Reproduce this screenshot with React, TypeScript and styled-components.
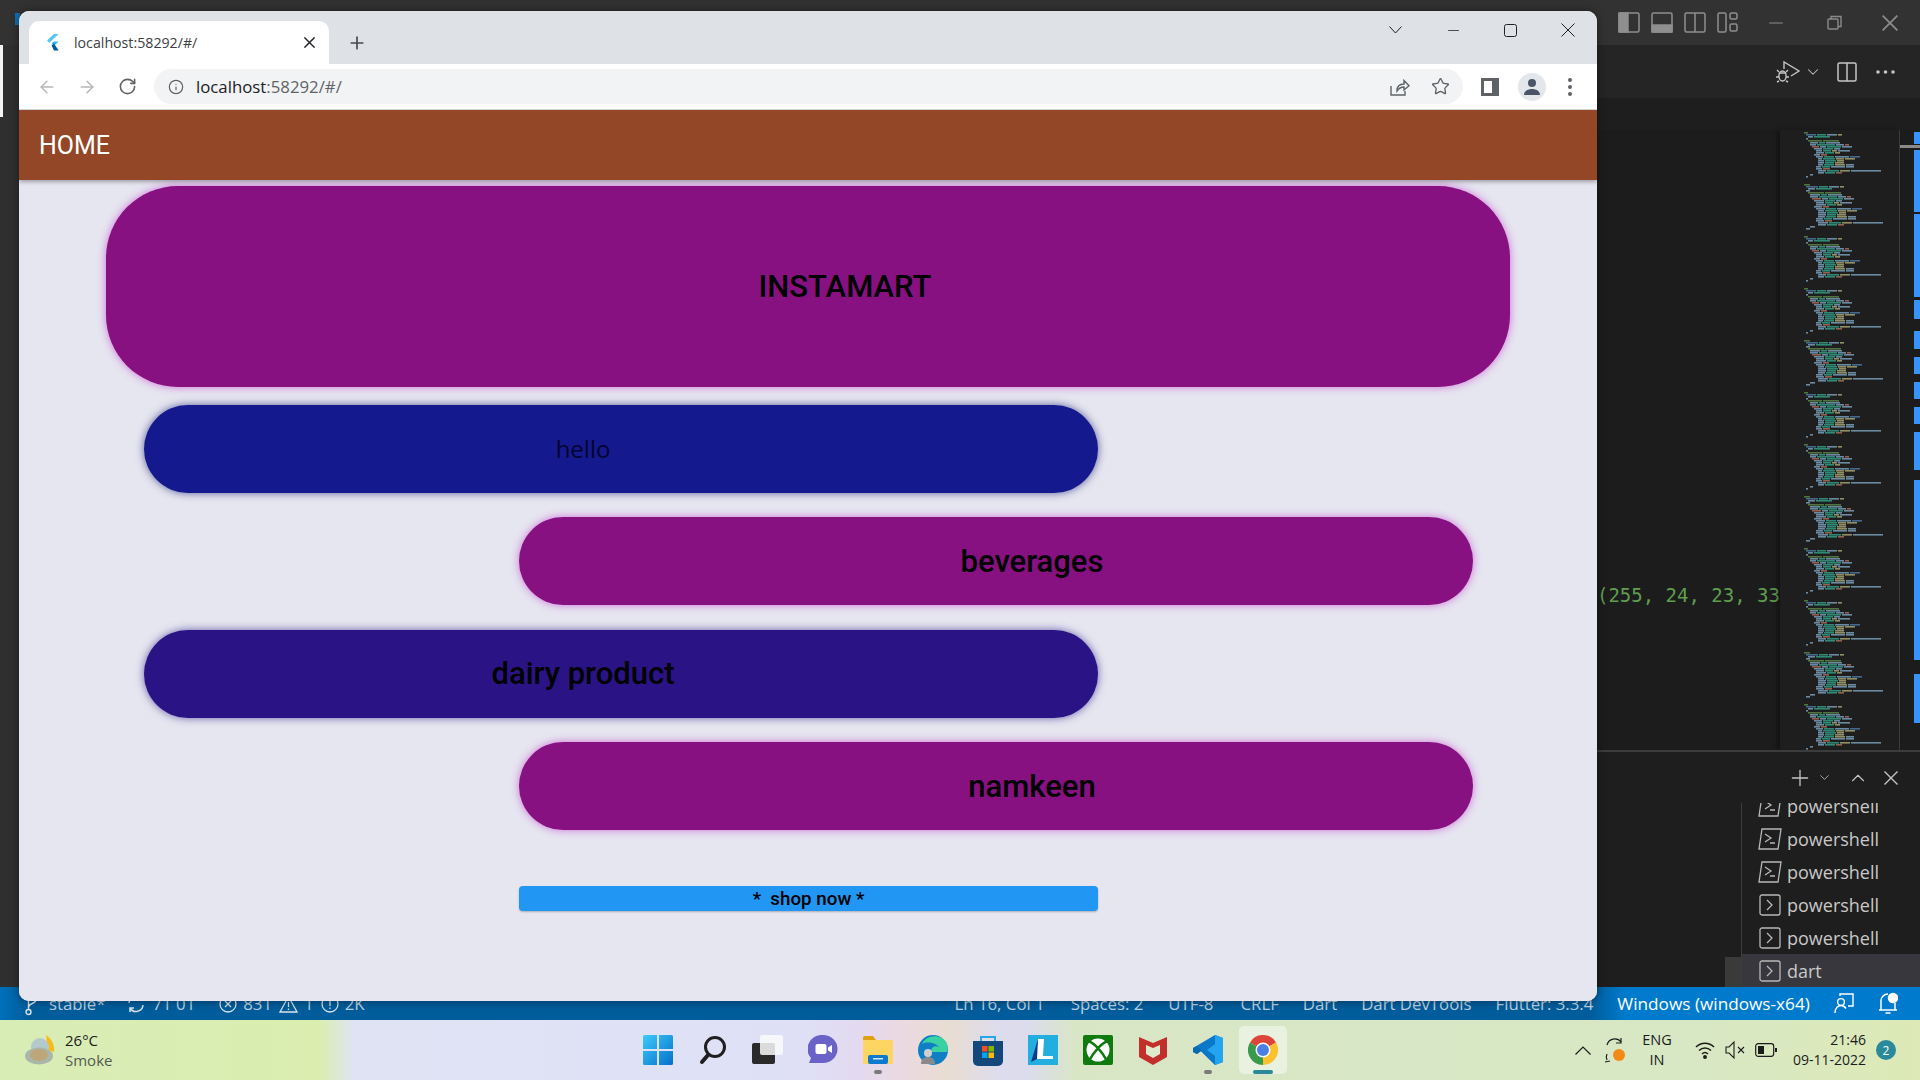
import React from 'react';
import styled, { createGlobalStyle } from 'styled-components';
import { ArrowLeft, ArrowRight, RotateCw, Info, Star, Plus, ChevronDown, ChevronUp, Minus } from 'lucide-react';

const UI_FONT = '"Open Sans", "Noto Sans", sans-serif';

const GlobalStyle = createGlobalStyle`
  html, body {
    margin: 0;
    padding: 0;
    background: #2c2c2c;
  }
  body {
    font-family: ${UI_FONT};
    overflow: hidden;
  }
  svg {
    display: block;
    flex-shrink: 0;
  }
`;

const Desktop = styled.div`
  position: relative;
  width: 1920px;
  height: 1080px;
  overflow: hidden;
  display: flex;
  flex-direction: column;
`;

/* ---------- vs code behind the browser ---------- */

const VsCode = styled.div`
  height: 1020px;
  display: flex;
  flex-direction: column;
  background: #1e1e1e;
`;

const TitleBar = styled.div`
  height: 45px;
  flex-shrink: 0;
  background: #323233;
  display: flex;
  align-items: center;
  padding-left: 15px;
`;

const VsLogoStub = styled.div`
  width: 5px;
  height: 12px;
  margin-top: -8px;
  background: #0f6fb5;
`;

const LayoutIcons = styled.div`
  margin-left: 1598px;
  display: flex;
  gap: 11px;
  color: #8f8f8f;
`;

const VsWindowButtons = styled.div`
  margin-left: 26px;
  display: flex;
  align-items: center;
  gap: 40px;
  color: #8a8a8a;
`;

const VsBody = styled.div`
  flex: 1;
  min-height: 0;
  display: flex;
`;

const ActivityBar = styled.div`
  width: 19px;
  flex-shrink: 0;
  background: #2f2f2f;
`;

const ActiveMarker = styled.div`
  width: 3px;
  height: 72px;
  background: #f4f4f4;
`;

const VsMain = styled.div`
  flex: 1;
  min-width: 0;
  display: flex;
  flex-direction: column;
`;

const TabsRow = styled.div`
  height: 53px;
  flex-shrink: 0;
  background: #252526;
  display: flex;
  align-items: center;
  justify-content: flex-end;
  padding-right: 25px;
  color: #c5c5c5;
`;

const IconSlot = styled.div`
  display: flex;
  align-items: center;
  margin-left: ${p => p.$gap}px;
`;

const Breadcrumb = styled.div`
  height: 32px;
  flex-shrink: 0;
  background: #1e1e1e;
`;

const EditorRow = styled.div`
  flex: 1;
  min-height: 0;
  display: flex;
  background: #1c1c1c;
`;

const CodeArea = styled.div`
  flex: 1;
  min-width: 0;
  overflow: hidden;
  display: flex;
  justify-content: flex-end;
  padding-top: 453px;
`;

const CodeLine = styled.div`
  font-family: "DejaVu Sans Mono", monospace;
  font-size: 19px;
  line-height: 24px;
  height: 24px;
  color: #5f9e50;
  white-space: pre;
`;

const Minimap = styled.div`
  width: 119px;
  flex-shrink: 0;
  background: #1e1e1e;
  overflow: hidden;
  box-shadow: -3px 0 5px rgba(0, 0, 0, 0.35);
`;

const OverviewRuler = styled.div`
  width: 21px;
  flex-shrink: 0;
  border-left: 1px solid #3a3a3a;
  box-sizing: border-box;
`;

const Panel = styled.div`
  height: 237px;
  flex-shrink: 0;
  box-sizing: border-box;
  border-top: 2px solid #3c3c3c;
  background: #1e1e1e;
  display: flex;
  flex-direction: column;
`;

const PanelHeader = styled.div`
  height: 51px;
  flex-shrink: 0;
  display: flex;
  align-items: center;
  justify-content: flex-end;
  padding-right: 22px;
  color: #c5c5c5;
`;

const PanelBody = styled.div`
  flex: 1;
  min-height: 0;
  display: flex;
`;

const PanelLeft = styled.div`
  flex: 1;
  display: flex;
  justify-content: flex-end;
  align-items: flex-end;
`;

const PanelThumb = styled.div`
  width: 16px;
  height: 30px;
  background: #3a3a3a;
`;

const TerminalList = styled.div`
  width: 179px;
  flex-shrink: 0;
  box-sizing: border-box;
  border-left: 1px solid #3c3c3c;
  overflow: hidden;
  display: flex;
  flex-direction: column;
  justify-content: flex-end;
`;

const TerminalRow = styled.div`
  height: 33px;
  flex-shrink: 0;
  display: flex;
  align-items: center;
  gap: 5px;
  padding-left: 16px;
  color: #c8c8c8;
  font-size: 18px;
  background: ${p => (p.$active ? '#37373d' : 'transparent')};
`;

const StatusBar = styled.div`
  height: 33px;
  flex-shrink: 0;
  display: flex;
  align-items: center;
  background: linear-gradient(90deg, #0070bb 0, #005c9a 30px, #005c9a 1590px, #007acc 1625px);
  color: #bcd0e0;
  font-size: 16.8px;
  white-space: nowrap;
`;

const StatusGroup = styled.div`
  display: flex;
  align-items: center;
  gap: ${p => p.$gap}px;
  margin-left: ${p => p.$left}px;
`;

const StatusItem = styled.span`
  display: flex;
  align-items: center;
  gap: ${p => p.$iconGap ?? 6}px;
  margin-right: ${p => p.$after ?? 0}px;
  color: ${p => (p.$bright ? '#ffffff' : 'inherit')};
  font-size: ${p => (p.$bright ? '17.2px' : 'inherit')};
`;

/* ---------- browser window ---------- */

const BrowserWindow = styled.div`
  position: absolute;
  left: 19px;
  top: 11px;
  width: 1578px;
  height: 990px;
  border-radius: 10px;
  overflow: hidden;
  display: flex;
  flex-direction: column;
  background: #e6e6f0;
  box-shadow: 0 0 8px rgba(0, 0, 0, 0.45);
`;

const TabStrip = styled.div`
  height: 53px;
  flex-shrink: 0;
  background: #dee1e6;
  display: flex;
  align-items: flex-end;
  padding-left: 10px;
`;

const Tab = styled.div`
  width: 300px;
  height: 43px;
  box-sizing: border-box;
  background: #ffffff;
  border-radius: 10px 10px 0 0;
  display: flex;
  align-items: center;
  padding: 0 14px 0 17px;
  color: #3c4043;
  font-size: 14.2px;
`;

const TabTitle = styled.span`
  flex: 1;
  margin-left: 15px;
`;

const NewTab = styled.div`
  height: 43px;
  margin-left: 18px;
  display: flex;
  align-items: center;
  color: #45494d;
`;

const WindowButtons = styled.div`
  margin-left: auto;
  align-self: flex-start;
  height: 38px;
  display: flex;
  align-items: center;
  color: #202124;
`;

const WindowButton = styled.div`
  width: 57.5px;
  display: flex;
  justify-content: center;
`;

const Toolbar = styled.div`
  height: 46px;
  flex-shrink: 0;
  box-sizing: border-box;
  background: #ffffff;
  border-bottom: 1px solid #dadce0;
  display: flex;
  align-items: center;
  padding: 0 16px 0 8px;
`;

const NavButton = styled.div`
  width: 40px;
  display: flex;
  justify-content: center;
  color: ${p => (p.$muted ? '#b4b6b9' : '#5f6368')};
`;

const Omnibox = styled.div`
  width: 1309px;
  height: 35px;
  margin-left: 7px;
  box-sizing: border-box;
  border-radius: 18px;
  background: #f1f3f4;
  display: flex;
  align-items: center;
  padding: 0 13px 0 14px;
  font-size: 16.8px;
  color: #5f6368;
`;

const UrlText = styled.span`
  flex: 1;
  margin-left: 12px;
`;

const UrlHost = styled.span`
  color: #202124;
`;

const OmniActions = styled.div`
  display: flex;
  align-items: center;
  gap: 21px;
  color: #5f6368;
`;

const ToolbarRight = styled.div`
  display: flex;
  align-items: center;
  margin-left: 18px;
  color: #5f6368;
`;

const Avatar = styled.div`
  width: 28px;
  height: 28px;
  margin-left: 19px;
  border-radius: 50%;
  background: #e3e6ea;
  display: flex;
  align-items: center;
  justify-content: center;
`;

const DotsMenu = styled.div`
  margin-left: 22px;
`;

const AppBar = styled.header`
  height: 70px;
  flex-shrink: 0;
  background: #934726;
  display: flex;
  align-items: center;
  padding-left: 20px;
  color: #ffffff;
  font-family: Roboto, sans-serif;
  font-size: 25px;
  box-shadow: 0 2px 4px rgba(0, 0, 0, 0.3);
  position: relative;
  z-index: 1;
`;

const Content = styled.main`
  flex: 1;
  display: flex;
  flex-direction: column;
  align-items: flex-start;
  background: #e6e6f0;
  font-family: Roboto, sans-serif;
  color: #000000;
`;

const Pill = styled.div`
  box-sizing: border-box;
  flex-shrink: 0;
  width: ${p => p.$width}px;
  height: ${p => p.$height}px;
  margin-top: ${p => p.$top}px;
  margin-left: ${p => p.$left}px;
  padding-left: ${p => (p.$shift > 0 ? p.$shift * 2 : 0)}px;
  padding-right: ${p => (p.$shift < 0 ? -p.$shift * 2 : 0)}px;
  padding-bottom: ${p => (p.$light || p.$raise ? 2 : 0)}px;
  border-radius: ${p => p.$radius}px;
  background: ${p => p.$bg};
  box-shadow: 0 0 8px ${p => p.$glow};
  display: flex;
  align-items: center;
  justify-content: center;
  font-size: 31px;
  font-weight: ${p => (p.$light ? 400 : 500)};
  ${p => p.$light && 'font-family: "Open Sans", sans-serif; font-size: 24px; color: #04042e;'}
`;

const ShopButton = styled.div`
  width: 579px;
  height: 25px;
  margin-top: 56px;
  margin-left: 500px;
  border-radius: 4px;
  background: #2196f3;
  box-shadow: 0 1px 2px rgba(0, 0, 0, 0.25);
  display: flex;
  align-items: center;
  justify-content: center;
  font-size: 18.8px;
  font-weight: 500;
  white-space: pre;
`;

/* ---------- taskbar ---------- */

const Taskbar = styled.footer`
  height: 60px;
  flex-shrink: 0;
  display: flex;
  align-items: center;
  background: linear-gradient(90deg,
    #d8ecb6 0, #dbeeb0 320px, #dfe4f4 355px, #dfe0f6 800px, #e3daf0 860px,
    #ebd9e2 900px, #e8ddd2 950px, #dddcee 1000px, #dcdcec 1030px, #d8e6c6 1075px,
    #d8e8c4 1700px, #dde9b6 1920px);
  color: #1c1c1c;
`;

const Weather = styled.div`
  width: 630px;
  flex-shrink: 0;
  box-sizing: border-box;
  padding-left: 25px;
  display: flex;
  align-items: center;
  gap: 10px;
`;

const WeatherText = styled.div`
  font-size: 15px;
  line-height: 20px;
`;

const MutedLine = styled.div`
  color: #555a50;
`;

const TaskIcons = styled.div`
  display: flex;
`;

const TaskSlot = styled.div`
  position: relative;
  width: 55px;
  height: 60px;
  display: flex;
  align-items: center;
  justify-content: center;
`;

const ActiveTile = styled(TaskSlot)`
  &::before {
    content: '';
    position: absolute;
    left: 4px;
    right: 3px;
    top: 6px;
    bottom: 6px;
    border-radius: 5px;
    background: rgba(255, 255, 255, 0.45);
  }
  svg {
    position: relative;
  }
`;

const RunDot = styled.div`
  position: absolute;
  left: 50%;
  bottom: 6px;
  transform: translateX(-50%);
  width: ${p => (p.$wide ? 20 : 8)}px;
  height: 4px;
  border-radius: 2px;
  background: ${p => (p.$wide ? '#2a8a9c' : '#7a7a7a')};
`;

const Tray = styled.div`
  display: flex;
  align-items: center;
  margin-left: 285px;
  font-size: 15px;
`;

const TrayItem = styled.div`
  margin-left: ${p => p.$left}px;
  display: flex;
  align-items: center;
`;

const TrayLang = styled.div`
  margin-left: 11px;
  width: 40px;
  text-align: center;
  line-height: 20px;
  font-size: 14.5px;
`;

const Clock = styled.div`
  margin-left: 15px;
  width: 74px;
  text-align: right;
  line-height: 20px;
  font-size: 14px;
  white-space: nowrap;
`;

const Badge = styled.div`
  width: 20px;
  height: 20px;
  margin-left: 10px;
  border-radius: 50%;
  background: #2a8a9c;
  color: #ffffff;
  font-size: 12px;
  display: flex;
  align-items: center;
  justify-content: center;
`;

/* ---------- data ---------- */

type Seg = [number, string];
const B = '#6a8ba3', T = '#2f8a75', K = '#928f66', P = '#96604f', G = '#4f7440', D = '#436a8e';

const minimapBlock: [number, Seg[]][] = [
  [2, [[4, G]]],
  [4, [[10, D], [9, T], [10, B], [4, K]]],
  [6, [[5, B], [16, T]]],
  [4, [[2, B]]],
  [6, [[14, G], [16, G]]],
  [8, [[8, B], [6, T], [14, B]]],
  [8, [[6, B], [18, T], [8, B], [4, P]]],
  [10, [[7, P], [6, B], [14, T], [10, B]]],
  [12, [[8, B], [10, T], [6, B]]],
  [14, [[6, B], [8, T], [5, K], [12, B]]],
  [14, [[8, B], [9, T], [5, K]]],
  [12, [[6, B], [6, P]]],
  [14, [[7, B], [10, T], [14, B], [10, D]]],
  [16, [[4, B], [12, T], [8, K], [10, K]]],
  [16, [[6, B], [11, T], [7, K]]],
  [16, [[6, B], [9, T], [9, K]]],
  [16, [[5, B], [10, T], [10, K], [8, B]]],
  [14, [[5, B], [8, T], [14, B], [8, B]]],
  [14, [[6, B], [7, P]]],
  [16, [[8, B], [12, T], [10, K], [30, B]]],
  [16, [[6, B], [10, T], [6, P]]],
  [8, [[3, B]]],
  [4, [[2, B]]],
];

const rulerMarks = [
  [2, 12], [20, 62], [84, 83], [170, 19], [201, 18], [227, 17], [252, 17], [277, 17],
  [302, 38], [350, 180], [544, 49],
];

const terminals = [
  { name: 'powershell', kind: 'tasks' },
  { name: 'powershell', kind: 'tasks' },
  { name: 'powershell', kind: 'tasks' },
  { name: 'powershell', kind: 'plain' },
  { name: 'powershell', kind: 'plain' },
  { name: 'dart', kind: 'plain', active: true },
];

/* ---------- drawings ---------- */

const FlutterIcon = () => (
  <svg width="13" height="17" viewBox="0 0 13 17">
    <path d="M8 0h4.600L3.400 8.700 1 6.600z" fill="#54c5f8" />
    <path d="M7.800 7.400h4.800L8 11.800 5.600 9.500z" fill="#29b6f6" />
    <path d="M5.600 11.600 8 9.600l4.600 6.900H8z" fill="#01579b" />
  </svg>
);

const ShareIcon = () => (
  <svg width="20" height="20" viewBox="0 0 20 20" fill="none" stroke="#5f6368" strokeWidth="1.4">
    <path d="M1 9v9h14v-4" />
    <path d="M7 14c0-5 3-7 7-7V3.500l5 5.200-5 4.300v-3c-3 0-5 1-7 4z" />
  </svg>
);

const SidePanelIcon = () => (
  <svg width="18" height="18" viewBox="0 0 18 18">
    <path d="M0 0h18v18H0z" fill="#5f6368" />
    <path d="M3 3h8v12H3z" fill="#ffffff" />
  </svg>
);

const ProfileIcon = () => (
  <svg width="18" height="18" viewBox="0 0 18 18" fill="#4a5568">
    <circle cx="9" cy="5" r="4" />
    <path d="M1 17c0-4 4-6 8-6s8 2 8 6z" />
  </svg>
);

const KebabIcon = () => (
  <svg width="4" height="18" viewBox="0 0 4 18" fill="#5f6368">
    <circle cx="2" cy="2" r="2" />
    <circle cx="2" cy="9" r="2" />
    <circle cx="2" cy="16" r="2" />
  </svg>
);

const SquareOutline = () => (
  <svg width="13" height="13" viewBox="0 0 13 13" fill="none" stroke="#202124" strokeWidth="1">
    <rect x="0.5" y="0.5" width="12" height="12" rx="2" />
  </svg>
);

const ThinX = ({ size = 14, color = '#202124', width = 1 }: { size?: number; color?: string; width?: number }) => (
  <svg width={size} height={size} viewBox="0 0 14 14" stroke={color} strokeWidth={width}>
    <path d="M0.500 0.500l13 13M13.500 0.500l-13 13" />
  </svg>
);

const ThinChevron = () => (
  <svg width="13" height="8" viewBox="0 0 13 8" fill="none" stroke="#202124">
    <path d="M0.500 0.500l6 6.500 6-6.500" />
  </svg>
);

const LayoutIcon = ({ kind }: { kind: string }) => (
  <svg width="22" height="21" viewBox="0 0 22 21" fill="none" stroke="#8f8f8f" strokeWidth="1.5">
    {kind === 'left' && <path d="M1 1h9v19H1z" fill="#8f8f8f" />}
    {kind === 'bottom' && <path d="M1 13h20v7H1z" fill="#8f8f8f" />}
    {kind === 'grid' ? (
      <>
        <rect x="1" y="1" width="8" height="19" rx="1.500" />
        <rect x="13" y="1" width="7" height="6" rx="1.500" />
        <rect x="13" y="12" width="7" height="7" rx="1.500" />
      </>
    ) : (
      <rect x="1" y="1" width="20" height="19" rx="1.500" />
    )}
    {kind === 'split' && <path d="M11 1v19" />}
  </svg>
);

const RestoreIcon = () => (
  <svg width="15" height="15" viewBox="0 0 15 15" fill="none" stroke="#8a8a8a" strokeWidth="1.4">
    <rect x="1" y="4" width="10" height="10" rx="1" />
    <path d="M4 4V1.500h10v10h-3" />
  </svg>
);

const DebugRunIcon = () => (
  <svg width="26" height="22" viewBox="0 0 26 22" fill="none" stroke="#c5c5c5" strokeWidth="1.4">
    <path d="M8 8V1l15 9-8 5" />
    <ellipse cx="6.500" cy="15" rx="3.600" ry="5" />
    <path d="M3 12h7M3 16H0M10 16h3M3 20l-2 1M10 20l2 1M3 11 1 9M10 11l2-2" />
  </svg>
);

const SplitIcon = () => (
  <svg width="20" height="20" viewBox="0 0 20 20" fill="none" stroke="#c5c5c5" strokeWidth="1.5">
    <rect x="1" y="1" width="18" height="18" rx="1.500" />
    <path d="M10 1v18" />
  </svg>
);

const EllipsisIcon = () => (
  <svg width="19" height="4" viewBox="0 0 19 4" fill="#c5c5c5">
    <circle cx="2" cy="2" r="1.800" />
    <circle cx="9.500" cy="2" r="1.800" />
    <circle cx="17" cy="2" r="1.800" />
  </svg>
);

const TerminalIcon = ({ kind }: { kind: string }) => (
  <svg width="24" height="22" viewBox="0 0 24 22" fill="none" stroke="#b8b8b8" strokeWidth="1.3">
    {kind === 'tasks' ? (
      <>
        <path d="M4 1h19l-3 20H1z" />
        <path d="M7 6l6 4-6 4M12 15h5" />
      </>
    ) : (
      <>
        <rect x="2" y="1" width="20" height="20" rx="2" />
        <path d="M9 6l5 5-5 5" />
      </>
    )}
  </svg>
);

const BranchIcon = () => (
  <svg width="15" height="24" viewBox="0 0 15 24" fill="none" stroke="#d6e3ee" strokeWidth="1.4">
    <circle cx="3.500" cy="20" r="2.500" />
    <circle cx="11" cy="5" r="2.500" />
    <path d="M3.500 17.500V3M11 7.500c0 5-7.500 3-7.500 8" />
  </svg>
);

const SyncIcon = () => (
  <svg width="20" height="20" viewBox="0 0 20 20" fill="none" stroke="#d6e3ee" strokeWidth="1.5">
    <path d="M17 11a7 7 0 0 1-13 3M3 9a7 7 0 0 1 13-3" />
    <path d="M16 2v4h-4M4 18v-4h4" />
  </svg>
);

const ErrorIcon = () => (
  <svg width="18" height="18" viewBox="0 0 18 18" fill="none" stroke="#d6e3ee" strokeWidth="1.3">
    <circle cx="9" cy="9" r="8" />
    <path d="M6 6l6 6M12 6l-6 6" />
  </svg>
);

const WarnIcon = () => (
  <svg width="19" height="18" viewBox="0 0 19 18" fill="none" stroke="#d6e3ee" strokeWidth="1.3">
    <path d="M9.500 1.500 18 17H1z" />
    <path d="M9.500 7v5M9.500 13.500v1.500" />
  </svg>
);

const InfoRing = () => (
  <svg width="18" height="18" viewBox="0 0 18 18" fill="none" stroke="#d6e3ee" strokeWidth="1.3">
    <circle cx="9" cy="9" r="8" />
    <path d="M9 4v7M9 12.500V14" />
  </svg>
);

const FeedbackIcon = () => (
  <svg width="20" height="22" viewBox="0 0 20 22" fill="none" stroke="#ffffff" strokeWidth="1.4">
    <circle cx="7" cy="9" r="3.400" />
    <path d="M1 20c0-5 3-7.500 6-7.500s4 1.500 5 3M6 3V1h13v12h-5" />
  </svg>
);

const BellIcon = () => (
  <svg width="20" height="24" viewBox="0 0 20 24" fill="none" stroke="#ffffff" strokeWidth="1.5">
    <path d="M3 18V9a7 7 0 0 1 7-7M1 18h18M7.500 21h5M17 11v7" />
    <circle cx="15" cy="6" r="4.500" fill="#ffffff" />
  </svg>
);

const WeatherIcon = () => (
  <svg width="30" height="30" viewBox="0 0 30 30">
    <path d="M21 0c7 5 9 12 8 17l-9-3c2-4 2-9 1-14z" fill="#f7bb17" />
    <circle cx="15" cy="12" r="9" fill="#b4c9cb" />
    <ellipse cx="14" cy="21" rx="14" ry="8.500" fill="#a9b6aa" />
    <ellipse cx="14" cy="20" rx="9" ry="6" fill="#bda77a" />
  </svg>
);

const WindowsLogo = () => (
  <svg width="30" height="30" viewBox="0 0 30 30">
    <defs>
      <linearGradient id="win" x1="0" y1="0" x2="1" y2="1">
        <stop offset="0" stopColor="#3ccbfa" />
        <stop offset="1" stopColor="#0570c9" />
      </linearGradient>
    </defs>
    <path d="M1.500 0H14v14H0V1.500A1.500 1.500 0 0 1 1.500 0zM16 0h12.500A1.500 1.500 0 0 1 30 1.500V14H16zM0 16h14v14H1.500A1.500 1.500 0 0 1 0 28.500zM16 16h14v12.500a1.500 1.500 0 0 1-1.500 1.500H16z" fill="url(#win)" />
  </svg>
);

const SearchLogo = () => (
  <svg width="28" height="30" viewBox="0 0 28 30" fill="none" stroke="#1f1f1f" strokeLinecap="round">
    <circle cx="16" cy="12" r="9.500" strokeWidth="3" />
    <path d="M9 20l-6 7" strokeWidth="4" />
  </svg>
);

const TaskViewLogo = () => (
  <svg width="32" height="30" viewBox="0 0 32 30">
    <rect x="0" y="8" width="23" height="21" rx="2" fill="#2a2a2a" />
    <rect x="8" y="0" width="23" height="20" rx="2" fill="#fafafa" fillOpacity="0.85" />
  </svg>
);

const ChatLogo = () => (
  <svg width="30" height="30" viewBox="0 0 30 30">
    <path d="M15 0a14.500 14 0 0 1 0 28H1l2-5A14.500 14 0 0 1 15 0z" fill="#6b62c8" />
    <rect x="7.500" y="9" width="11" height="10" rx="2" fill="#ffffff" />
    <path d="M20 12.500 24 10v8l-4-2.500z" fill="#ffffff" />
  </svg>
);

const FolderLogo = () => (
  <svg width="30" height="28" viewBox="0 0 30 28">
    <path d="M0 2a2 2 0 0 1 2-2h8l3 4h-13z" fill="#e0a010" />
    <rect x="0" y="4" width="30" height="24" rx="1" fill="#fdd562" />
    <rect x="5" y="19" width="20" height="9" rx="2" fill="#0f78d0" />
    <rect x="10" y="22" width="10" height="1.500" fill="#cfe8fb" />
  </svg>
);

const EdgeLogo = () => (
  <svg width="30" height="30" viewBox="0 0 30 30">
    <circle cx="15" cy="15" r="15" fill="#0f7ec4" />
    <path d="M4 9C7 2 16-1 24 3c5 3 7 9 5 14H13c0-5 4-7 8-5-3-4-12-6-17-3z" fill="#39d2a0" />
    <circle cx="10" cy="18" r="4" fill="#cfcfcf" />
    <path d="M3 29c0-5 3-7 7-7s7 2 7 7z" fill="#8a8a8a" />
  </svg>
);

const StoreLogo = () => (
  <svg width="30" height="31" viewBox="0 0 30 31">
    <path d="M8 6V2h14v4" fill="none" stroke="#25a7e8" strokeWidth="2" />
    <path d="M0 6h30v20a5 5 0 0 1-5 5H5a5 5 0 0 1-5-5z" fill="#14487c" />
    <rect x="9" y="11" width="5.500" height="5.500" fill="#f25022" />
    <rect x="15.500" y="11" width="5.500" height="5.500" fill="#7fba00" />
    <rect x="9" y="17.500" width="5.500" height="5.500" fill="#00a4ef" />
    <rect x="15.500" y="17.500" width="5.500" height="5.500" fill="#ffb900" />
  </svg>
);

const LLogo = () => (
  <svg width="30" height="30" viewBox="0 0 30 30">
    <rect width="30" height="30" fill="#22aede" />
    <path d="M10 4h6l-1 17h10v3H7z" fill="#ffffff" />
    <path d="M10 4 6 24h1z" fill="#0e3a86" />
    <path d="M3 27 10 4l-1 20z" fill="#0e3a86" />
  </svg>
);

const XboxLogo = () => (
  <svg width="30" height="30" viewBox="0 0 30 30">
    <rect width="30" height="30" rx="2" fill="#0f7b0f" />
    <circle cx="15" cy="15" r="11.500" fill="#ffffff" />
    <path d="M5 6c5 1 14 10 19 20M25 6C20 7 11 16 6 26" fill="none" stroke="#0f7b0f" strokeWidth="2.600" />
  </svg>
);

const McafeeLogo = () => (
  <svg width="28" height="30" viewBox="0 0 28 30">
    <path d="M0 2l14 6 14-6v20L14 30 0 22z" fill="#c3302b" />
    <path d="M7 10l7 3 7-3v9l-7 4-7-4z" fill="#ddeacc" />
  </svg>
);

const VsCodeLogo = () => (
  <svg width="30" height="30" viewBox="0 0 30 30">
    <path d="M22 0 30 3v24l-8 3L8 16l-4 3-4-2v-4z" fill="#0a78c8" />
    <path d="M22 0 30 3v24l-8 3V21l-8-6 8-6z" fill="#23a4ee" />
    <path d="M0 13l4-2 18 19L8 16l-4 3-4-2z" fill="#0a6ab2" />
  </svg>
);

const ChromeLogo = () => (
  <svg width="30" height="30" viewBox="0 0 30 30">
    <path d="M15 15 2 7.500A15 15 0 0 1 28 7.500z" fill="#de4437" />
    <path d="M15 15 28 7.500A15 15 0 0 1 15 30z" fill="#fbc02d" />
    <path d="M15 15 15 30A15 15 0 0 1 2 7.500z" fill="#3a9a4c" />
    <circle cx="15" cy="15" r="7.500" fill="#ffffff" />
    <circle cx="15" cy="15" r="6" fill="#4a7fe8" />
  </svg>
);

const CaretUp = () => (
  <svg width="16" height="9" viewBox="0 0 16 9" fill="none" stroke="#1c1c1c" strokeWidth="1.2">
    <path d="M0.500 8.500 8 1l7.500 7.500" />
  </svg>
);

const UpdateIcon = () => (
  <svg width="22" height="30" viewBox="0 0 22 30">
    <path d="M3 10a8 8 0 0 1 14-3M3 25c-1-2-1-4 0-6" fill="none" stroke="#1c1c1c" strokeWidth="1.2" />
    <path d="M17 3v5h-5M1 27l5-1" fill="none" stroke="#1c1c1c" strokeWidth="1.2" />
    <circle cx="15" cy="20" r="6" fill="#f48a16" />
  </svg>
);

const WifiIcon = () => (
  <svg width="20" height="20" viewBox="0 0 20 20" fill="none" stroke="#1c1c1c" strokeWidth="1.5">
    <path d="M1 7c5-5 13-5 18 0M4 10.500c3.500-3.500 8.500-3.500 12 0M7 14c2-2 4-2 6 0" />
    <circle cx="10" cy="17" r="1.200" fill="#1c1c1c" />
  </svg>
);

const SpeakerIcon = () => (
  <svg width="20" height="20" viewBox="0 0 20 20" fill="none" stroke="#1c1c1c" strokeWidth="1.1">
    <path d="M1 7v6h3l5 5V2L4 7zM13 7l6 6M19 7l-6 6" />
  </svg>
);

const BatteryIcon = () => (
  <svg width="22" height="14" viewBox="0 0 22 14">
    <rect x="0.700" y="0.700" width="18" height="12.600" rx="2.500" fill="none" stroke="#1c1c1c" strokeWidth="1.2" />
    <rect x="3" y="3" width="6" height="8" fill="#1c1c1c" />
    <rect x="20" y="5" width="2" height="4" fill="#1c1c1c" />
  </svg>
);

const MinimapDrawing = () => {
  const rows: React.ReactNode[] = [];
  const period = minimapBlock.length * 2 + 6;
  for (let repeat = 0; repeat < 13; repeat++) {
    minimapBlock.forEach(([indent, segs], line) => {
      let x = 22 + indent;
      segs.forEach(([len, color], i) => {
        const extra = repeat % 3 === 1 && i === 0 ? 2 : 0;
        rows.push(
          <rect
            key={`${repeat}-${line}-${i}`}
            x={x}
            y={2 + repeat * period + line * 2}
            width={len + extra}
            height={1.6}
            fill={color}
          />
        );
        x += len + 1 + extra;
      });
    });
  }
  return (
    <svg width="119" height="620" viewBox="0 0 119 620">
      {rows}
    </svg>
  );
};

const RulerDrawing = () => (
  <svg width="20" height="620" viewBox="0 0 20 620">
    <rect x="0" y="15" width="20" height="3" fill="#8a8a8a" />
    {rulerMarks.map(([y, h]) => (
      <rect key={y} x="14" y={y} width="6" height={h} fill="#3794ff" />
    ))}
  </svg>
);

const taskIcons = [
  { id: 'win', icon: <WindowsLogo /> },
  { id: 'search', icon: <SearchLogo /> },
  { id: 'tasks', icon: <TaskViewLogo /> },
  { id: 'chat', icon: <ChatLogo /> },
  { id: 'folder', icon: <FolderLogo />, running: true },
  { id: 'edge', icon: <EdgeLogo /> },
  { id: 'store', icon: <StoreLogo /> },
  { id: 'l', icon: <LLogo /> },
  { id: 'xbox', icon: <XboxLogo /> },
  { id: 'mcafee', icon: <McafeeLogo /> },
  { id: 'code', icon: <VsCodeLogo />, running: true },
];

const App = () => {
  return (
    <>
      <GlobalStyle />
      <Desktop>
        <VsCode>
          <TitleBar>
            <VsLogoStub />
            <LayoutIcons>
              <LayoutIcon kind="left" />
              <LayoutIcon kind="bottom" />
              <LayoutIcon kind="split" />
              <LayoutIcon kind="grid" />
            </LayoutIcons>
            <VsWindowButtons>
              <Minus size={22} strokeWidth={1.2} />
              <RestoreIcon />
              <ThinX size={16} color="#8a8a8a" width={1.6} />
            </VsWindowButtons>
          </TitleBar>
          <VsBody>
            <ActivityBar>
              <ActiveMarker />
            </ActivityBar>
            <VsMain>
              <TabsRow>
                <DebugRunIcon />
                <IconSlot $gap={2}>
                  <ChevronDown size={18} strokeWidth={1.4} />
                </IconSlot>
                <IconSlot $gap={15}>
                  <SplitIcon />
                </IconSlot>
                <IconSlot $gap={19}>
                  <EllipsisIcon />
                </IconSlot>
              </TabsRow>
              <Breadcrumb />
              <EditorRow>
                <CodeArea>
                  <CodeLine>(255, 24, 23, 33</CodeLine>
                </CodeArea>
                <Minimap>
                  <MinimapDrawing />
                </Minimap>
                <OverviewRuler>
                  <RulerDrawing />
                </OverviewRuler>
              </EditorRow>
              <Panel>
                <PanelHeader>
                  <Plus size={26} strokeWidth={1.2} />
                  <IconSlot $gap={4}>
                    <ChevronDown size={15} strokeWidth={1.3} />
                  </IconSlot>
                  <IconSlot $gap={15}>
                    <ChevronUp size={22} strokeWidth={1.2} />
                  </IconSlot>
                  <IconSlot $gap={15}>
                    <ThinX size={14} color="#c5c5c5" width={1.4} />
                  </IconSlot>
                </PanelHeader>
                <PanelBody>
                  <PanelLeft>
                    <PanelThumb />
                  </PanelLeft>
                  <TerminalList>
                    {terminals.map((t, i) => (
                      <TerminalRow key={i} $active={t.active}>
                        <TerminalIcon kind={t.kind} />
                        {t.name}
                      </TerminalRow>
                    ))}
                  </TerminalList>
                </PanelBody>
              </Panel>
            </VsMain>
          </VsBody>
          <StatusBar>
            <StatusGroup $gap={0} $left={25}>
              <StatusItem $iconGap={9}>
                <BranchIcon />
                stable*
              </StatusItem>
            </StatusGroup>
            <StatusGroup $gap={0} $left={21}>
              <StatusItem>
                <SyncIcon />
                71 01
              </StatusItem>
            </StatusGroup>
            <StatusGroup $gap={7} $left={24}>
              <StatusItem>
                <ErrorIcon />
                831
              </StatusItem>
              <StatusItem>
                <WarnIcon />1
              </StatusItem>
              <StatusItem>
                <InfoRing />
                2K
              </StatusItem>
            </StatusGroup>
            <StatusGroup $gap={24} $left={590}>
              <StatusItem $after={2}>Ln 16, Col 1</StatusItem>
              <StatusItem $after={1}>Spaces: 2</StatusItem>
              <StatusItem $after={3}>UTF-8</StatusItem>
              <StatusItem>CRLF</StatusItem>
              <StatusItem>Dart</StatusItem>
              <StatusItem>Dart DevTools</StatusItem>
              <StatusItem>Flutter: 3.3.4</StatusItem>
              <StatusItem $bright>Windows (windows-x64)</StatusItem>
              <StatusItem $bright>
                <FeedbackIcon />
              </StatusItem>
              <StatusItem $bright>
                <BellIcon />
              </StatusItem>
            </StatusGroup>
          </StatusBar>
        </VsCode>

        <Taskbar>
          <Weather>
            <WeatherIcon />
            <WeatherText>
              <div>26°C</div>
              <MutedLine>Smoke</MutedLine>
            </WeatherText>
          </Weather>
          <TaskIcons>
            {taskIcons.map(item => (
              <TaskSlot key={item.id}>
                {item.icon}
                {item.running && <RunDot />}
              </TaskSlot>
            ))}
            <ActiveTile>
              <ChromeLogo />
              <RunDot $wide />
            </ActiveTile>
          </TaskIcons>
          <Tray>
            <CaretUp />
            <TrayItem $left={13}>
              <UpdateIcon />
            </TrayItem>
            <TrayLang>
              ENG
              <br />
              IN
            </TrayLang>
            <TrayItem $left={18}>
              <WifiIcon />
            </TrayItem>
            <TrayItem $left={10}>
              <SpeakerIcon />
            </TrayItem>
            <TrayItem $left={10}>
              <BatteryIcon />
            </TrayItem>
            <Clock>
              21:46
              <br />
              09-11-2022
            </Clock>
            <Badge>2</Badge>
          </Tray>
        </Taskbar>

        <BrowserWindow>
          <TabStrip>
            <Tab>
              <FlutterIcon />
              <TabTitle>localhost:58292/#/</TabTitle>
              <ThinX size={11} color="#202124" width={1.8} />
            </Tab>
            <NewTab>
              <Plus size={20} strokeWidth={2} />
            </NewTab>
            <WindowButtons>
              <WindowButton>
                <ThinChevron />
              </WindowButton>
              <WindowButton>
                <Minus size={17} strokeWidth={1.1} />
              </WindowButton>
              <WindowButton>
                <SquareOutline />
              </WindowButton>
              <WindowButton>
                <ThinX size={14} />
              </WindowButton>
            </WindowButtons>
          </TabStrip>
          <Toolbar>
            <NavButton $muted>
              <ArrowLeft size={20} strokeWidth={1.7} />
            </NavButton>
            <NavButton $muted>
              <ArrowRight size={20} strokeWidth={1.7} />
            </NavButton>
            <NavButton>
              <RotateCw size={19} strokeWidth={2} />
            </NavButton>
            <Omnibox>
              <Info size={16} strokeWidth={1.8} />
              <UrlText>
                <UrlHost>localhost</UrlHost>:58292/#/
              </UrlText>
              <OmniActions>
                <ShareIcon />
                <Star size={19} strokeWidth={1.7} />
              </OmniActions>
            </Omnibox>
            <ToolbarRight>
              <SidePanelIcon />
              <Avatar>
                <ProfileIcon />
              </Avatar>
              <DotsMenu>
                <KebabIcon />
              </DotsMenu>
            </ToolbarRight>
          </Toolbar>
          <AppBar>HOME</AppBar>
          <Content>
            <Pill $width={1404} $height={201} $top={6} $left={87} $radius={72} $shift={37} $bg="#871180" $glow="rgba(200, 90, 210, 0.85)">
              INSTAMART
            </Pill>
            <Pill $width={954} $height={88} $top={18} $left={125} $radius={44} $shift={-38} $bg="#141a8e" $glow="rgba(50, 55, 130, 0.8)" $light>
              hello
            </Pill>
            <Pill $width={954} $height={88} $top={24} $left={500} $radius={44} $shift={36} $bg="#871180" $glow="rgba(200, 90, 210, 0.85)">
              beverages
            </Pill>
            <Pill $width={954} $height={88} $top={25} $left={125} $radius={44} $shift={-38} $bg="#2a1485" $glow="rgba(70, 60, 150, 0.8)" $raise>
              dairy product
            </Pill>
            <Pill $width={954} $height={88} $top={24} $left={500} $radius={44} $shift={36} $bg="#871180" $glow="rgba(200, 90, 210, 0.85)">
              namkeen
            </Pill>
            <ShopButton>*  shop now *</ShopButton>
          </Content>
        </BrowserWindow>
      </Desktop>
    </>
  );
};

export default App;
